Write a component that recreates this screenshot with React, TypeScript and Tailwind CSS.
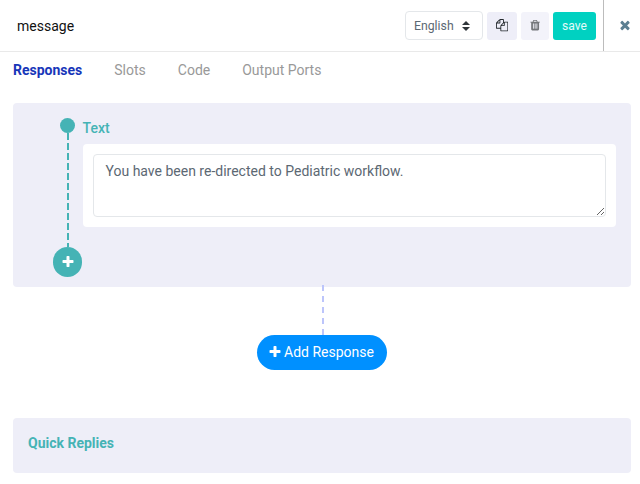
import React from "react";

const paths = {
  copy: "M1696 384q40 0 68 28t28 68v1216q0 40-28 68t-68 28h-960q-40 0-68-28t-28-68v-288h-544q-40 0-68-28t-28-68v-672q0-40 20-88t48-76l408-408q28-28 76-48t88-20h416q40 0 68 28t28 68v328q68-40 128-40h416zm-544 213l-299 299h299v-299zm-640-384l-299 299h299v-299zm196 647l316-316v-416h-384v416q0 40-28 68t-68 28h-416v640h512v-256q0-40 20-88t48-76zm956 804v-1152h-384v416q0 40-28 68t-68 28h-416v640h896z",
  trash: "M704 1376v-704q0-14-9-23t-23-9h-64q-14 0-23 9t-9 23v704q0 14 9 23t23 9h64q14 0 23-9t9-23zm256 0v-704q0-14-9-23t-23-9h-64q-14 0-23 9t-9 23v704q0 14 9 23t23 9h64q14 0 23-9t9-23zm256 0v-704q0-14-9-23t-23-9h-64q-14 0-23 9t-9 23v704q0 14 9 23t23 9h64q14 0 23-9t9-23zm-544-992h448l-48-117q-7-9-17-11h-317q-10 2-17 11zm928 32v64q0 14-9 23t-23 9h-96v948q0 83-47 143.5t-113 60.5h-832q-66 0-113-58.5t-47-141.5v-952h-96q-14 0-23-9t-9-23v-64q0-14 9-23t23-9h309l70-167q15-37 54-63t79-26h320q40 0 79 26t54 63l70 167h309q14 0 23 9t9 23z",
  close: "M1490 1322q0 40-28 68l-136 136q-28 28-68 28t-68-28l-294-294-294 294q-28 28-68 28t-68-28l-136-136q-28-28-28-68t28-68l294-294-294-294q-28-28-28-68t28-68l136-136q28-28 68-28t68 28l294 294 294-294q28-28 68-28t68 28l136 136q28 28 28 68t-28 68l-294 294 294 294q28 28 28 68z",
  plus: "M1600 736v192q0 40-28 68t-68 28h-416v416q0 40-28 68t-68 28h-192q-40 0-68-28t-28-68v-416h-416q-40 0-68-28t-28-68v-192q0-40 28-68t68-28h416v-416q0-40 28-68t68-28h192q40 0 68 28t28 68v416h416q40 0 68 28t28 68z",
};

function Icon({ name, className }: { name: keyof typeof paths; className: string }) {
  return (
    <svg viewBox="0 0 1792 1792" fill="currentColor" className={className} aria-hidden="true">
      <path d={paths[name]} />
    </svg>
  );
}

function Header() {
  return (
    <header className="flex h-[52px] border-b border-[#e9e9e9]">
      <div className="flex flex-1 items-center pr-[7px] pl-[17px]">
        <h1 className="flex-1 text-sm text-[#111111]">message</h1>
        <button className="mr-1 flex h-[29px] w-[78px] items-center justify-between rounded-[4px] border border-[#e4e7ea] pr-3 pl-2 text-[12.25px] text-[#5c6873]">
          <span className="pt-[2px]">English</span>
          <svg viewBox="0 0 8 10" className="h-[10px] w-2" fill="#2f353a">
            <path d="M4 0L0 4h8zM4 10L0 6h8z" />
          </svg>
        </button>
        <button className="mr-1 flex h-7 w-[30px] items-center justify-center rounded-[3px] bg-[#eeeef8] text-[#23282c]" aria-label="Copy">
          <Icon name="copy" className="size-[12.25px]" />
        </button>
        <button className="mr-1 flex h-7 w-7 items-center justify-center rounded-[3px] bg-[#f3f3fa] text-[#74777a]" aria-label="Delete">
          <Icon name="trash" className="size-[12.25px]" />
        </button>
        <button className="h-7 w-[43px] rounded-[3px] bg-[#00d1c1] pt-[2px] text-[12px] tracking-[0.1px] text-white/90">save</button>
      </div>
      <button className="flex w-[37px] items-center justify-center border-l border-[#bcbcbc] pb-px pl-[6px] text-[#5c7f92]" aria-label="Close">
        <Icon name="close" className="size-[14px]" />
      </button>
    </header>
  );
}

export default function App() {
  return (
    <div className="h-[484px] w-[640px] overflow-hidden bg-white font-['Roboto',sans-serif] text-sm">
      <Header />
      <nav className="flex h-[51px] gap-8 pt-2 pl-[13px] leading-5 text-[#999999]">
        <span className="font-bold text-[#1736b9]">Responses</span>
        <span>Slots</span>
        <span>Code</span>
        <span>Output Ports</span>
      </nav>
      <main className="pr-[9px] pl-[13px]">
        <section className="flex h-[184px] rounded-[4px] bg-[#eeeef8] pr-[15px] pl-10 text-[#45b3b5]">
          <div className="flex w-[29px] flex-col items-center pt-[15px]">
            <div className="size-[15px] shrink-0 rounded-full bg-[#45b3b5]" />
            <svg className="ml-px h-[114px] w-[2px]" viewBox="0 0 2 114">
              <line x1="1" y1="0" x2="1" y2="114" stroke="currentColor" strokeWidth="2" strokeDasharray="7 3" />
            </svg>
            <button className="flex h-[30px] w-[29px] items-center justify-center rounded-full bg-[#45b3b5] text-white" aria-label="Add">
              <Icon name="plus" className="size-[14px]" />
            </button>
          </div>
          <div className="ml-px flex-1 pt-[15px]">
            <h2 className="-ml-[0.5px] text-sm leading-5 font-medium">Text</h2>
            <div className="mt-[6px] h-[83px] rounded-[4px] bg-white p-[10px]">
              <textarea
                className="block h-[63px] w-full rounded-[4px] border border-[#e4e7ea] px-[11.5px] py-[6px] text-sm leading-[21px] text-[#5c6873] outline-none"
                defaultValue="You have been re-directed to Pediatric workflow."
              />
            </div>
          </div>
        </section>
        <div className="-mt-[2px] flex h-[133px] flex-col items-center">
          <svg className="ml-[2px] h-[50px] w-[2px]" viewBox="0 0 2 50">
            <line x1="1" y1="0" x2="1" y2="50" stroke="#bcc5fb" strokeWidth="2" strokeDasharray="6 5" />
          </svg>
          <button className="flex h-[35px] w-[130px] items-center justify-center gap-[2px] rounded-full bg-[#0090ff] pr-[2px] pb-px text-sm text-white">
            <Icon name="plus" className="size-[14px]" />
            Add Response
          </button>
        </div>
        <section className="h-[55px] rounded-[4px] bg-[#eeeef8] px-[15px] pt-[15px] leading-5 font-bold text-[#45b3b5]">
          Quick Replies
        </section>
      </main>
    </div>
  );
}
